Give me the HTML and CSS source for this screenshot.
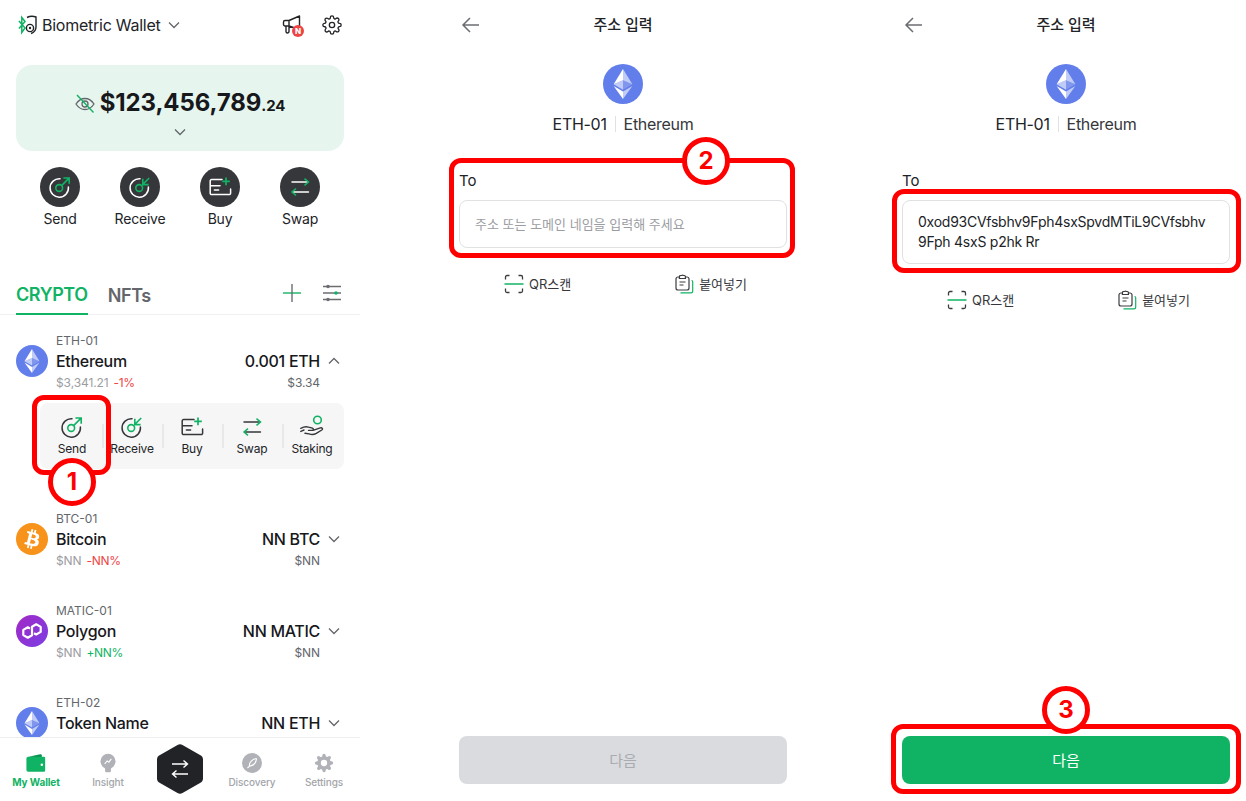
FILE: index.html
```html
<!DOCTYPE html>
<html lang="ko">
<head>
<meta charset="utf-8">
<title>Biometric Wallet</title>
<link rel="stylesheet" href="styles.css">
</head>
<body>
<svg class="defs" aria-hidden="true">
  <symbol id="i-send" viewBox="0 0 24 24"><path d="M12 3.800A9.200 9.200 0 1 0 20.400 12" fill="none" stroke="currentColor" stroke-width="1.500" stroke-linecap="round"/><circle cx="11.200" cy="13" r="3.400" fill="none" stroke="#10b364" stroke-width="1.600"/><path d="M13.600 10.600 20.800 3.400M15.400 3h5.800v5.800" fill="none" stroke="#10b364" stroke-width="1.600"/></symbol>
  <symbol id="i-receive" viewBox="0 0 24 24"><path d="M12 3.800A9.200 9.200 0 1 0 20.400 12" fill="none" stroke="currentColor" stroke-width="1.500" stroke-linecap="round"/><circle cx="11.200" cy="13" r="3.400" fill="none" stroke="#10b364" stroke-width="1.600"/><path d="M21.200 3 14.800 9.400M14.800 3.800v5.800h5.800" fill="none" stroke="#10b364" stroke-width="1.600"/></symbol>
  <symbol id="i-buy" viewBox="0 0 24 24"><path d="M14 4.500H3.600A1.400 1.400 0 0 0 2.200 6v12.200a1.400 1.400 0 0 0 1.400 1.400h17.600a1.400 1.400 0 0 0 1.400-1.400V14M2.200 10.800H12M6.400 15h4.200" fill="none" stroke="currentColor" stroke-width="1.500" stroke-linecap="round"/><path d="M18 2.600v7.600M14.200 6.400h7.600" fill="none" stroke="#10b364" stroke-width="1.700"/></symbol>
  <symbol id="i-swap" viewBox="0 0 24 24"><path d="M4 7h15.500M20.500 17H5" fill="none" stroke="currentColor" stroke-width="1.400" stroke-linecap="round"/><path d="M16.500 3.600 20.500 7l-4 3.400M8 13.600 4 17l4 3.400" fill="none" stroke="#10b364" stroke-width="1.500"/></symbol>
  <symbol id="i-staking" viewBox="0 0 24 24"><circle cx="17.500" cy="5" r="3.800" fill="none" stroke="#10b364" stroke-width="1.600"/><path d="M.8 13.300c3-1.700 5.200-2 7.800-1.200l3.900 1.100c1.300.4 1.100 2.200-.3 2.200H8.500m4.500 0 7.300-2.500c1.800-.6 2.900 1.100 1.500 2.100l-5.500 3.400c-2.400 1.400-4.700 1.500-7.300.5L5 18.200M.8 16.400 4 15" fill="none" stroke="currentColor" stroke-width="1.400" stroke-linecap="round" stroke-linejoin="round"/></symbol>
  <symbol id="i-down" viewBox="0 0 12 12"><path d="M1 3.500 6 8.500l5-5" fill="none" stroke="currentColor" stroke-width="1.300"/></symbol>
  <symbol id="i-eth" viewBox="0 0 32 32"><circle cx="16" cy="16" r="16" fill="#627eea"/><path d="M16 4v8.900l7.500 3.300z" fill="#fff" fill-opacity=".6"/><path d="M16 4 8.500 16.200l7.500-3.300z" fill="#fff"/><path d="M16 22v6l7.500-10.400z" fill="#fff" fill-opacity=".6"/><path d="M16 28v-6l-7.500-4.400z" fill="#fff"/><path d="m16 20.600 7.500-4.400-7.500-3.300z" fill="#fff" fill-opacity=".2"/><path d="m8.500 16.200 7.500 4.400v-7.700z" fill="#fff" fill-opacity=".6"/></symbol>
  <symbol id="i-gear" viewBox="0 0 24 24"><path d="M19.400 15a1.650 1.650 0 0 0 .33 1.820l.06.06a2 2 0 0 1 0 2.830 2 2 0 0 1-2.830 0l-.06-.06a1.650 1.650 0 0 0-1.820-.33 1.650 1.650 0 0 0-1 1.510V21a2 2 0 0 1-2 2 2 2 0 0 1-2-2v-.09A1.650 1.650 0 0 0 9 19.400a1.650 1.650 0 0 0-1.820.33l-.06.06a2 2 0 0 1-2.830 0 2 2 0 0 1 0-2.830l.06-.06a1.650 1.650 0 0 0 .33-1.820 1.650 1.650 0 0 0-1.510-1H3a2 2 0 0 1-2-2 2 2 0 0 1 2-2h.09A1.650 1.650 0 0 0 4.600 9a1.650 1.650 0 0 0-.33-1.820l-.06-.06a2 2 0 0 1 0-2.830 2 2 0 0 1 2.830 0l.06.06a1.650 1.650 0 0 0 1.820.33H9a1.650 1.650 0 0 0 1-1.510V3a2 2 0 0 1 2-2 2 2 0 0 1 2 2v.09a1.650 1.650 0 0 0 1 1.510 1.650 1.650 0 0 0 1.820-.33l.06-.06a2 2 0 0 1 2.830 0 2 2 0 0 1 0 2.830l-.06.06a1.650 1.650 0 0 0-.33 1.820V9a1.650 1.650 0 0 0 1.510 1H21a2 2 0 0 1 2 2 2 2 0 0 1-2 2h-.09a1.650 1.650 0 0 0-1.510 1z"/></symbol>
  <symbol id="i-back" viewBox="0 0 24 24"><path d="M20 12H4.500M11 5l-7 7 7 7" fill="none" stroke="#6b6d72" stroke-width="1.500"/></symbol>
  <symbol id="i-qr" viewBox="0 0 20 20"><path d="M1.500 5.500V3A1.500 1.500 0 0 1 3 1.500h2.500M14.500 1.500H17A1.500 1.500 0 0 1 18.500 3v2.500M1.500 14.500V17A1.500 1.500 0 0 0 3 18.500h2.500M14.500 18.500H17a1.500 1.500 0 0 0 1.500-1.500v-2.500" fill="none" stroke="#3a3c40" stroke-width="1.300"/><path d="M.5 10h19" stroke="#10b364" stroke-width="1.500"/></symbol>
  <symbol id="i-paste" viewBox="0 0 20 20"><path d="M5.500 3H4a2 2 0 0 0-2 2v9a2 2 0 0 0 2 2h9a2 2 0 0 0 2-2V5a2 2 0 0 0-2-2h-1.500M5.500 2.500a1 1 0 0 1 1-1H7.500a2 2 0 0 1 2 0h.9a1 1 0 0 1 1 1V4.500h-6zM5.500 8h6M5.500 11h4" fill="none" stroke="#3a3c40" stroke-width="1.200"/><path d="M17.500 6.500c.8 0 1.200.5 1.200 1.200v9.500c0 1-.6 1.600-1.600 1.600H6.500" fill="none" stroke="#10b364" stroke-width="1.200"/></symbol>
</svg>

<main class="stage">

  <section class="screen">
    <header class="wallet-head">
      <svg class="wallet-logo" viewBox="0 0 20 20"><path d="M9 2.500c2-1 6-1.500 9-.5v10c0 3-2 5.500-5 6.500" fill="none" stroke="#222327" stroke-width="1.400"/><path d="M1 6l6 7-3.200 4.500V2.500L7 6.500 1 13.500" fill="none" stroke="#10b364" stroke-width="1.500"/><circle cx="12" cy="13" r="3.600" fill="none" stroke="#222327" stroke-width="1.400"/><circle cx="12" cy="13" r="1.200" fill="#222327"/></svg>
      <span class="wallet-name">Biometric Wallet</span>
      <svg class="chev-head"><use href="#i-down"/></svg>
      <span class="head-spacer"></span>
      <span class="notice">
        <svg class="notice-horn" viewBox="0 0 20 20"><path d="M7 5.500 17.500 1v13.500L7 11H3a1.500 1.500 0 0 1-1.500-1.500V7A1.500 1.500 0 0 1 3 5.500zM7 5.500V11M4 11v5.500a1.500 1.500 0 0 0 3 0V11" fill="none" stroke="#222327" stroke-width="1.400" stroke-linejoin="round"/></svg>
        <span class="notice-dot">N</span>
      </span>
      <svg class="head-gear" viewBox="0 0 24 24"><use href="#i-gear"/><circle cx="12" cy="12" r="3.200"/></svg>
    </header>

    <div class="balance">
      <div class="balance-line">
        <svg class="eye" viewBox="0 0 20 20"><path d="M1 10c2.500-3.800 5.500-5.500 9-5.500s6.500 1.700 9 5.500c-2.500 3.800-5.500 5.500-9 5.500S3.500 13.800 1 10z" fill="none" stroke="#63666b" stroke-width="1.300"/><circle cx="10" cy="10" r="3" fill="none" stroke="#63666b" stroke-width="1.300"/><path d="M2 1l16.500 17.500" stroke="#10b364" stroke-width="1.400"/></svg>
        <span class="balance-main">$123,456,789<small class="balance-cents">.24</small></span>
      </div>
      <svg class="balance-chev"><use href="#i-down"/></svg>
    </div>

    <nav class="quick">
      <div class="quick-item"><span class="quick-dot"><svg class="quick-icon"><use href="#i-send"/></svg></span><span>Send</span></div>
      <div class="quick-item"><span class="quick-dot"><svg class="quick-icon"><use href="#i-receive"/></svg></span><span>Receive</span></div>
      <div class="quick-item"><span class="quick-dot"><svg class="quick-icon"><use href="#i-buy"/></svg></span><span>Buy</span></div>
      <div class="quick-item"><span class="quick-dot"><svg class="quick-icon"><use href="#i-swap"/></svg></span><span>Swap</span></div>
    </nav>

    <div class="tabs">
      <span class="tab tab-active">CRYPTO</span>
      <span class="tab">NFTs</span>
      <span class="head-spacer"></span>
      <svg class="tab-plus" viewBox="0 0 18 18"><path d="M0 9h18" stroke="#10b364" stroke-width="1.400"/><path d="M9 0v18" stroke="#6b6d72" stroke-width="1.400"/></svg>
      <svg class="tab-filter" viewBox="0 0 18 18"><path d="M0 2.500h18M0 9h18M0 15.500h18" stroke="#6b6d72" stroke-width="1.300"/><circle cx="5" cy="2.500" r="1.800" fill="#6b6d72"/><circle cx="13" cy="9" r="1.800" fill="#10b364"/><circle cx="5" cy="15.500" r="1.800" fill="#6b6d72"/></svg>
    </div>

    <div class="assets">
      <div class="asset asset-open">
        <span class="asset-id">ETH-01</span>
        <svg class="asset-logo"><use href="#i-eth"/></svg>
        <span class="asset-name">Ethereum</span>
        <span class="asset-amount">0.001 ETH</span>
        <svg class="asset-chev chev-up"><use href="#i-down"/></svg>
        <span class="asset-price">$3,341.21<em class="down">-1%</em></span>
        <span class="asset-value">$3.34</span>
      </div>
      <div class="tray">
        <div class="tray-item"><svg class="tray-icon"><use href="#i-send"/></svg><span>Send</span></div>
        <div class="tray-item"><svg class="tray-icon"><use href="#i-receive"/></svg><span>Receive</span></div>
        <div class="tray-item"><svg class="tray-icon"><use href="#i-buy"/></svg><span>Buy</span></div>
        <div class="tray-item"><svg class="tray-icon"><use href="#i-swap"/></svg><span>Swap</span></div>
        <div class="tray-item"><svg class="tray-icon"><use href="#i-staking"/></svg><span>Staking</span></div>
      </div>
      <div class="asset">
        <span class="asset-id">BTC-01</span>
        <svg class="asset-logo" viewBox="0 0 32 32"><circle cx="16" cy="16" r="16" fill="#f7931a"/><path fill="#fff" d="M23.189 14.02c.314-2.096-1.283-3.223-3.465-3.975l.708-2.84-1.728-.43-.69 2.765c-.454-.114-.92-.22-1.385-.326l.695-2.783L15.596 6l-.708 2.839c-.376-.086-.746-.17-1.104-.26l.002-.009-2.384-.595-.46 1.846s1.283.294 1.256.312c.7.175.826.638.805 1.006l-.806 3.235c.048.012.11.03.18.057l-.183-.045-1.13 4.532c-.086.212-.303.531-.793.41.018.025-1.256-.313-1.256-.313l-.858 1.978 2.25.561c.418.105.828.215 1.231.318l-.715 2.872 1.727.43.708-2.84c.472.127.93.245 1.378.357l-.706 2.828 1.728.43.715-2.866c2.948.558 5.164.333 6.097-2.333.752-2.146-.037-3.385-1.588-4.192 1.13-.26 1.98-1.003 2.207-2.538zm-3.95 5.538c-.533 2.147-4.148.986-5.32.695l.95-3.805c1.172.293 4.929.872 4.37 3.11zm.535-5.569c-.487 1.953-3.495.96-4.47.717l.86-3.45c.975.243 4.118.696 3.61 2.733z"/></svg>
        <span class="asset-name">Bitcoin</span>
        <span class="asset-amount">NN BTC</span>
        <svg class="asset-chev"><use href="#i-down"/></svg>
        <span class="asset-price">$NN<em class="down">-NN%</em></span>
        <span class="asset-value">$NN</span>
      </div>
      <div class="asset">
        <span class="asset-id">MATIC-01</span>
        <svg class="asset-logo" viewBox="0 0 32 32"><defs><linearGradient id="matic-fill" x1="0" y1="0" x2="1" y2="1"><stop offset="0" stop-color="#a229c5"/><stop offset="1" stop-color="#7b3fe4"/></linearGradient></defs><circle cx="16" cy="16" r="16" fill="url(#matic-fill)"/><path d="M14 13.600 11.800 12.300 7.300 14.900V20.100L11.800 22.700 16 20.200V11.800L20.200 9.300 24.700 11.900V16.900L20.200 19.500 18 18.200" fill="none" stroke="#fff" stroke-width="2.200" stroke-linejoin="round"/></svg>
        <span class="asset-name">Polygon</span>
        <span class="asset-amount">NN MATIC</span>
        <svg class="asset-chev"><use href="#i-down"/></svg>
        <span class="asset-price">$NN<em class="up">+NN%</em></span>
        <span class="asset-value">$NN</span>
      </div>
      <div class="asset">
        <span class="asset-id">ETH-02</span>
        <svg class="asset-logo"><use href="#i-eth"/></svg>
        <span class="asset-name">Token Name</span>
        <span class="asset-amount">NN ETH</span>
        <svg class="asset-chev"><use href="#i-down"/></svg>
      </div>
    </div>

    <nav class="bottom-nav">
      <div class="nav-item nav-active">
        <svg class="nav-icon" viewBox="0 0 24 24"><path d="M3 4.500 17 1.500c1-.2 2 .5 2 1.500v2z" fill="#0c8f50"/><path d="M.5 6.500A2 2 0 0 1 2.500 4.500h19a1.500 1.500 0 0 1 1.500 1.500v15a1.500 1.500 0 0 1-1.500 1.500h-19a2 2 0 0 1-2-2z" fill="#10b364"/><circle cx="19" cy="14" r="1.500" fill="#fff"/></svg>
        <span>My Wallet</span>
      </div>
      <div class="nav-item">
        <svg class="nav-icon" viewBox="0 0 24 24"><circle cx="12" cy="10" r="9" fill="#b0b2b7"/><path d="M8.500 18h7v3.500a1.500 1.500 0 0 1-1.500 1.500h-4a1.500 1.500 0 0 1-1.500-1.500z" fill="#b0b2b7"/><path d="M8 13l3-3.500 2 1.500 3-4" fill="none" stroke="#fff" stroke-width="1.300"/></svg>
        <span>Insight</span>
      </div>
      <div class="nav-item nav-hex">
        <svg class="hex" viewBox="0 0 46 50"><path d="M20.500 1a5 5 0 0 1 5 0L43 11a5 5 0 0 1 3 4.500v19a5 5 0 0 1-3 4.500L25.500 49a5 5 0 0 1-5 0L3 39a5 5 0 0 1-3-4.500v-19A5 5 0 0 1 3 11z" fill="#222327"/><path d="M15 20h15M26.500 16.500 30.500 20l-4 3.500M31 30H16M19.500 26.500 15.500 30l4 3.500" fill="none" stroke="#fff" stroke-width="1.400"/></svg>
      </div>
      <div class="nav-item">
        <svg class="nav-icon" viewBox="0 0 24 24"><circle cx="12" cy="12" r="12" fill="#b0b2b7"/><path d="M17.500 6.500c-.5 4.500-3 8.500-8.500 9.500l-2.500 2M9 16c-.8-4.500 3-8.500 8.500-9.500" fill="none" stroke="#fff" stroke-width="1.300"/></svg>
        <span>Discovery</span>
      </div>
      <div class="nav-item">
        <svg class="nav-icon nav-gear" viewBox="0 0 24 24"><use href="#i-gear"/><circle cx="12" cy="12" r="3.800" fill="#fff"/></svg>
        <span>Settings</span>
      </div>
    </nav>

    <span class="mark mark-send"></span>
    <span class="badge badge-one">1</span>
  </section>

  <section class="screen form">
    <header class="form-head">
      <svg class="back"><use href="#i-back"/></svg>
      <h1 class="form-title">주소 입력</h1>
    </header>
    <svg class="form-logo"><use href="#i-eth"/></svg>
    <div class="form-coin"><span>ETH-01</span><i class="coin-sep"></i><span class="coin-name">Ethereum</span></div>
    <label class="to-label">To</label>
    <div class="to-input to-empty">주소 또는 도메인 네임을 입력해 주세요</div>
    <div class="to-actions">
      <span class="to-action"><svg class="to-icon"><use href="#i-qr"/></svg>QR스캔</span>
      <span class="to-action"><svg class="to-icon"><use href="#i-paste"/></svg>붙여넣기</span>
    </div>
    <button class="next next-off">다음</button>
    <span class="mark mark-to"></span>
    <span class="badge badge-two">2</span>
  </section>

  <section class="screen form">
    <header class="form-head">
      <svg class="back"><use href="#i-back"/></svg>
      <h1 class="form-title">주소 입력</h1>
    </header>
    <svg class="form-logo"><use href="#i-eth"/></svg>
    <div class="form-coin"><span>ETH-01</span><i class="coin-sep"></i><span class="coin-name">Ethereum</span></div>
    <label class="to-label">To</label>
    <div class="to-input to-filled">0xod93CVfsbhv9Fph4sxSpvdMTiL9CVfsbhv<br>9Fph 4sxS p2hk Rr</div>
    <div class="to-actions">
      <span class="to-action"><svg class="to-icon"><use href="#i-qr"/></svg>QR스캔</span>
      <span class="to-action"><svg class="to-icon"><use href="#i-paste"/></svg>붙여넣기</span>
    </div>
    <button class="next next-on">다음</button>
    <span class="mark mark-filled"></span>
    <span class="mark mark-next"></span>
    <span class="badge badge-three">3</span>
  </section>

</main>
</body>
</html>
```

FILE: styles.css
```css
* { box-sizing: border-box; }

html, body {
  margin: 0;
  height: 801px;
  overflow: hidden;
  background: #fff;
}

body {
  font-family: Inter, "Noto Sans CJK KR", "Noto Sans", sans-serif;
  color: #222327;
}

.defs { display: none; }

.stage {
  display: flex;
  gap: 83px;
  height: 801px;
}

.screen {
  position: relative;
  display: flex;
  flex-direction: column;
  width: 360px;
  height: 801px;
  flex: none;
}

/* wallet header */
.wallet-head {
  display: flex;
  align-items: center;
  height: 50px;
  padding: 0 18px;
}
.wallet-logo { width: 20px; height: 20px; margin-right: 4px; }
.wallet-name { font-size: 16px; line-height: 24px; letter-spacing: -0.25px; }
.chev-head { width: 12px; height: 12px; margin-left: 7px; color: #63666b; }
.head-spacer { flex: 1; }
.notice { position: relative; display: block; width: 20px; height: 20px; margin-right: 20px; }
.notice-horn { display: block; width: 20px; height: 20px; }
.notice-dot {
  position: absolute;
  right: -2px;
  bottom: -2px;
  width: 12px;
  height: 12px;
  border-radius: 50%;
  background: #ef4444;
  color: #fff;
  font-size: 8px;
  font-weight: 800;
  line-height: 12px;
  text-align: center;
}
.head-gear { width: 20px; height: 20px; fill: none; stroke: #222327; stroke-width: 1.600; overflow: visible; }

/* balance */
.balance {
  display: flex;
  flex-direction: column;
  align-items: center;
  height: 86px;
  margin: 15px 16px 0;
  padding-top: 23px;
  border-radius: 16px;
  background: #e6f5ee;
}
.balance-line { display: flex; align-items: center; gap: 5px; height: 32px; }
.eye { width: 20px; height: 20px; }
.balance-main { font-size: 24px; font-weight: 700; line-height: 32px; letter-spacing: -0.1px; color: #17181b; }
.balance-cents { font-size: 15px; font-weight: 700; }
.balance-chev { width: 12px; height: 12px; margin-top: 6px; color: #63666b; }

/* quick actions */
.quick {
  display: grid;
  grid-template-columns: repeat(4, 80px);
  justify-content: center;
  margin-top: 16px;
}
.quick-item {
  display: flex;
  flex-direction: column;
  align-items: center;
  gap: 2px;
  font-size: 14px;
  line-height: 20px;
  letter-spacing: -0.2px;
}
.quick-dot {
  display: flex;
  align-items: center;
  justify-content: center;
  width: 40px;
  height: 40px;
  border-radius: 50%;
  background: #36373b;
  color: #fff;
}
.quick-icon { width: 24px; height: 24px; }

/* tabs */
.tabs {
  display: flex;
  align-items: center;
  height: 43px;
  margin-top: 43px;
  padding: 0 19px 0 16px;
  border-bottom: 1px solid #eeeff0;
}
.tab {
  display: flex;
  align-items: center;
  height: 43px;
  margin-right: 20px;
  padding-top: 4px;
  font-size: 18px;
  font-weight: 600;
  letter-spacing: -0.4px;
  color: #63666b;
}
.tab-active {
  color: #10b364;
  border-bottom: 2px solid #10b364;
  margin-bottom: -1px;
}
.tab-plus { width: 18px; height: 18px; margin: 0 22px 0 0; }
.tab-filter { width: 18px; height: 18px; }

/* assets */
.assets {
  flex: 1;
  min-height: 0;
  overflow: hidden;
  padding-top: 17px;
}
.asset {
  display: grid;
  grid-template-columns: 32px 1fr auto 12px;
  column-gap: 8px;
  grid-template-rows: 16px 26px 17px;
  align-items: center;
  margin-bottom: 33px;
  padding: 0 20px 0 16px;
}
.asset-open { margin-bottom: 12px; }
.asset-id { grid-column: 2; grid-row: 1; font-size: 12px; color: #63666b; }
.asset-logo { grid-column: 1; grid-row: 2; width: 32px; height: 32px; margin: -3px 0; }
.asset-name { grid-column: 2; grid-row: 2; font-size: 16px; font-weight: 500; letter-spacing: -0.3px; color: #17181b; }
.asset-amount { grid-column: 3; grid-row: 2; font-size: 16px; font-weight: 500; letter-spacing: -0.3px; color: #17181b; text-align: right; }
.asset-chev { grid-column: 4; grid-row: 2; width: 12px; height: 12px; color: #63666b; }
.chev-up { transform: rotate(180deg); }
.asset-price { grid-column: 2; grid-row: 3; font-size: 12px; letter-spacing: -0.1px; color: #9b9da2; }
.asset-price em { margin-left: 5px; font-style: normal; letter-spacing: -0.3px; }
.asset-value { grid-column: 3; grid-row: 3; font-size: 12px; letter-spacing: -0.1px; color: #63666b; text-align: right; }
.down { color: #ef4444; }
.up { color: #10b364; }

.tray {
  display: grid;
  grid-template-columns: repeat(5, 60px);
  justify-content: center;
  height: 66px;
  margin: 0 16px 41px 40px;
  border-radius: 8px;
  background: #f6f6f6;
}
.tray-item {
  position: relative;
  display: flex;
  flex-direction: column;
  align-items: center;
  padding-top: 12px;
  font-size: 12px;
  line-height: 16px;
  letter-spacing: -0.2px;
  white-space: nowrap;
}
.tray-item + .tray-item::before {
  content: "";
  position: absolute;
  left: 0;
  top: 21px;
  width: 2px;
  height: 24px;
  background: #e8e8e8;
}
.tray-icon { width: 24px; height: 24px; margin-bottom: 2px; color: #36373b; }

/* bottom nav */
.bottom-nav {
  display: grid;
  grid-template-columns: repeat(5, 72px);
  height: 64px;
  flex: none;
  border-top: 1px solid #eeeff0;
  background: #fff;
}
.nav-item {
  display: flex;
  flex-direction: column;
  align-items: center;
  gap: 3px;
  padding-top: 15px;
  font-size: 10px;
  font-weight: 500;
  line-height: 12px;
  letter-spacing: -0.1px;
  color: #a3a5aa;
  white-space: nowrap;
}
.nav-active { color: #10b364; font-weight: 700; }
.nav-icon { width: 20px; height: 20px; }
.nav-gear { fill: #b0b2b7; }
.nav-hex { padding-top: 6px; }
.hex { width: 46px; height: 50px; }

/* form screens */
.form { padding: 0 16px 17px; }
.form-head {
  display: grid;
  grid-template-columns: 24px 1fr 24px;
  align-items: center;
  height: 50px;
  flex: none;
}
.back { width: 24px; height: 24px; }
.form-title {
  margin: 0;
  font-size: 15px;
  font-weight: 500;
  line-height: 20px;
  text-align: center;
}
.form-logo { width: 40px; height: 40px; margin: 14px auto 0; flex: none; }
.form-coin {
  display: flex;
  align-items: center;
  justify-content: center;
  gap: 8px;
  height: 24px;
  margin-top: 8px;
  font-size: 16px;
  line-height: 24px;
  letter-spacing: -0.3px;
}
.coin-name { color: #36373b; }
.coin-sep { width: 1px; height: 16px; background: #e0e1e3; }
.to-label { margin-top: 35px; font-size: 15px; line-height: 20px; }
.to-input {
  margin-top: 9px;
  padding: 0 15px;
  border: 1px solid #e0e1e3;
  border-radius: 8px;
  font-size: 13px;
  line-height: 20px;
}
.to-empty {
  display: flex;
  align-items: center;
  height: 48px;
  color: #9b9da2;
}
.to-filled {
  height: 64px;
  padding-top: 11px;
  font-size: 14px;
  letter-spacing: -0.25px;
  color: #222327;
}
.to-actions {
  display: flex;
  justify-content: space-between;
  margin-top: 26px;
  padding: 0 40px 0 45px;
}
.to-action {
  display: flex;
  align-items: center;
  gap: 5px;
  font-size: 13px;
  line-height: 20px;
  color: #36373b;
}
.to-icon { width: 20px; height: 20px; }
.next {
  height: 48px;
  margin-top: auto;
  padding: 0 0 2px;
  flex: none;
  border: 0;
  border-radius: 8px;
  font-family: inherit;
  font-size: 15px;
  font-weight: 400;
}
.next-off { background: #d9dbde; color: #a9abb0; }
.next-on { background: #10b364; color: #fff; }

/* red annotations over the screens */
.mark {
  position: absolute;
  border: 5px solid #f00;
  border-radius: 12px;
  pointer-events: none;
}
.mark-send { left: 32px; top: 395px; width: 79px; height: 80px; }
.mark-to { left: 6px; top: 158px; width: 346px; height: 100px; }
.mark-filled { left: 6px; top: 189px; width: 349px; height: 84px; }
.mark-next { left: 5px; top: 724px; width: 350px; height: 70px; }

.badge {
  position: absolute;
  width: 48px;
  height: 48px;
  border: 5px solid #f00;
  border-radius: 50%;
  background: #fff;
  color: #f00;
  font-size: 24px;
  font-weight: 700;
  line-height: 38px;
  text-align: center;
}
.badge-one { left: 48px; top: 458px; }
.badge-two { left: 239px; top: 137px; }
.badge-three { left: 156px; top: 686px; }
```
